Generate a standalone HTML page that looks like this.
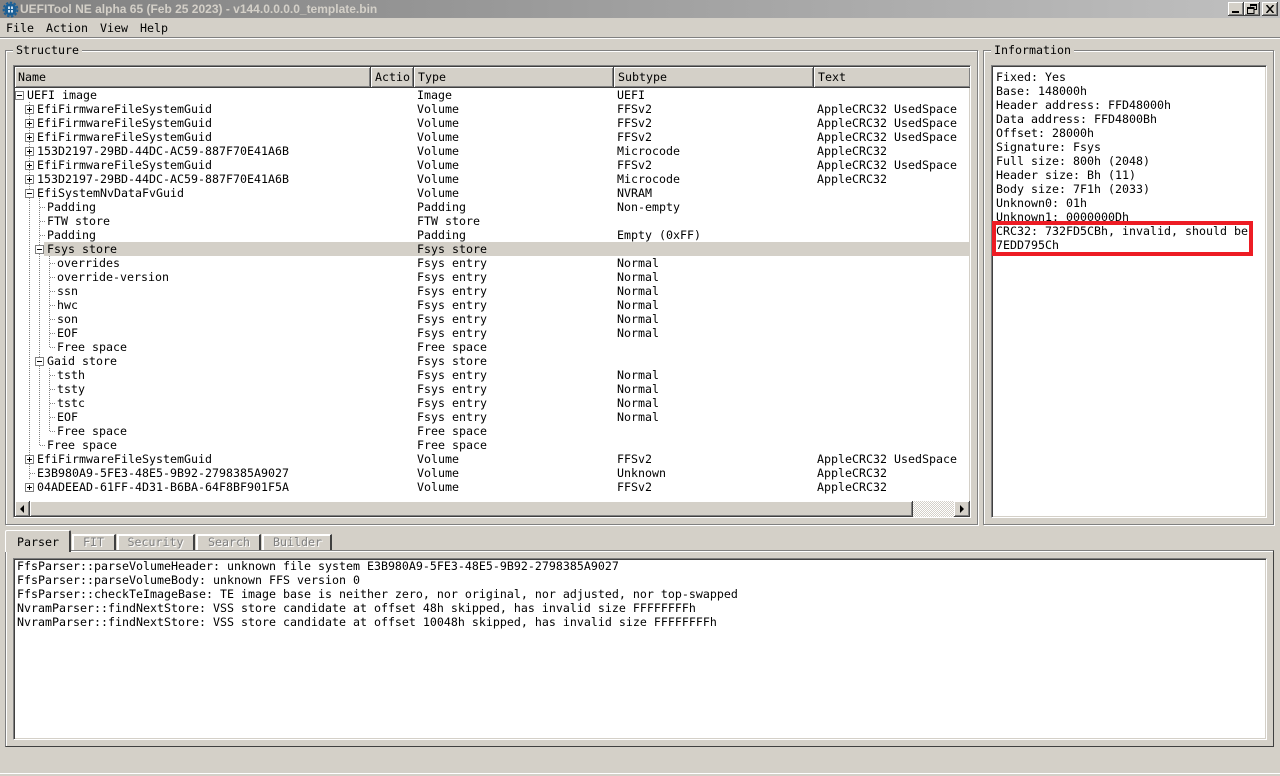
<!DOCTYPE html>
<html><head><meta charset="utf-8"><title>UEFITool</title>
<style>
html,body{margin:0;padding:0;width:1280px;height:776px;overflow:hidden;background:#d4d0c8}
body{position:relative;font:11.63px/14px "DejaVu Sans Mono","Liberation Mono",monospace;color:#000}
div,span,svg{position:absolute;box-sizing:border-box}
#tt{left:0;top:0;width:1280px;height:18px;background:linear-gradient(90deg,#808080,#c0c0c0)}
#tt b{position:absolute;left:20px;top:1px;font:bold 12px/16px "Liberation Sans",sans-serif;color:#d4d0c8;white-space:nowrap}
.wb{top:2px;width:16px;height:14px;background:#d4d0c8;box-shadow:inset -1px -1px 0 #404040,inset 1px 1px 0 #fff,inset -2px -2px 0 #808080}
.m{top:21px;white-space:pre}
.grp{border:1px solid #808080;box-shadow:1px 1px 0 #fff,inset 1px 1px 0 #fff}
.lbl{background:#d4d0c8;padding:0 3px;white-space:pre;height:14px}
.sunk{background:#fff;border-top:1px solid #808080;border-left:1px solid #808080;box-shadow:inset 1px 1px 0 #404040,inset -1px -1px 0 #d4d0c8;border-right:1px solid #fff;border-bottom:1px solid #fff}
.h{top:67px;height:21px;background:#d4d0c8;border-bottom:1px solid #404040;border-right:1px solid #404040;box-shadow:inset 1px 1px 0 #fff,inset -1px -1px 0 #808080;padding:3px 0 0 4px;white-space:pre;overflow:hidden}
.r{left:0;width:1280px;height:14px;white-space:pre}
.r span{top:0}
.l0{left:27px}.l1{left:37px}.l2{left:47px}.l3{left:57px}
.t{left:417px}.s{left:617px}.x{left:817px}
.tab{background:#d4d0c8;border:1px solid #808080;border-bottom:0;box-shadow:inset 1px 1px 0 #fff;border-left-color:#fff;border-top-color:#fff;border-right:2px solid #404040;text-align:center;color:#808080;text-shadow:1px 1px 0 #fff;top:534px;height:16px;line-height:15px}
.sb{top:501px;width:16px;height:16px;background:#d4d0c8;box-shadow:inset -1px -1px 0 #404040,inset 1px 1px 0 #fff,inset -2px -2px 0 #808080}
</style></head><body>
<div id="tt"><b>UEFITool NE alpha 65 (Feb 25 2023) - v144.0.0.0.0_template.bin</b>
<svg style="left:2px;top:1px" width="17" height="17" viewBox="0 0 17 17"><circle cx="8.500" cy="8.500" r="6" fill="#1a5f96"/><circle cx="8.500" cy="8.500" r="7" fill="none" stroke="#1a5f96" stroke-width="1.800" stroke-dasharray="2.500 1.500"/><rect x="6" y="5.500" width="5" height="6" fill="#cfe0ee"/><path d="M8.500 5.500v6M6 8.500h5" stroke="#1a5f96"/></svg>
</div>
<div class="wb" style="left:1228px"><svg style="left:4px;top:9px" width="8" height="2"><rect width="7" height="2" fill="#000"/></svg></div>
<div class="wb" style="left:1244px"><svg style="left:3px;top:2px" width="10" height="10"><path d="M3.500 2.500V.5h6v5h-2M.5 3.500h6.500v6H.5z" fill="none" stroke="#000"/><path d="M3 1h7M0 4h7" stroke="#000" stroke-width="1" transform="translate(0,.5)"/></svg></div>
<div class="wb" style="left:1262px"><svg style="left:4px;top:3px" width="9" height="8"><path d="M.5 0l7 8M7.500 0l-7 8" stroke="#000" stroke-width="1.500"/></svg></div>

<span class="m" style="left:6px">File</span><span class="m" style="left:46px">Action</span><span class="m" style="left:100px">View</span><span class="m" style="left:140px">Help</span>
<div style="left:0;top:37px;width:1280px;height:1px;background:#808080"></div>
<div style="left:0;top:38px;width:1280px;height:1px;background:#fff"></div>

<div class="grp" style="left:5px;top:50px;width:973px;height:475px"></div>
<span class="lbl" style="left:13px;top:43px">Structure</span>
<div class="grp" style="left:983px;top:50px;width:291px;height:475px"></div>
<span class="lbl" style="left:991px;top:43px">Information</span>

<div class="sunk" style="left:13px;top:65px;width:958px;height:453px"></div>
<div class="h" style="left:15px;width:356px;padding-left:3px">Name</div>
<div class="h" style="left:371px;width:43px">Actio</div>
<div class="h" style="left:414px;width:200px">Type</div>
<div class="h" style="left:614px;width:200px">Subtype</div>
<div class="h" style="left:814px;width:156px;border-right:0">Text</div>

<div style="left:44px;top:242px;width:926px;height:14px;background:#d4d0c8"></div>
<svg style="left:0;top:0" width="100" height="500" fill="none">
<g stroke="#808080" stroke-dasharray="1 1">
<path d="M29.500 102V480M39.500 198V445M49.500 256V347M49.500 368V431"/>
<path d="M40 207.500h5M40 221.500h5M40 235.500h5M40 445.500h5M50 263.500h5M50 277.500h5M50 291.500h5M50 305.500h5M50 319.500h5M50 333.500h5M50 347.500h5M50 375.500h5M50 389.500h5M50 403.500h5M50 417.500h5M50 431.500h5M30 473.500h5"/>
</g>
<g fill="#fff" stroke="#808080">
<rect x="15.500" y="91.500" width="8" height="8"/>
<rect x="25.500" y="105.500" width="8" height="8"/><rect x="25.500" y="119.500" width="8" height="8"/><rect x="25.500" y="133.500" width="8" height="8"/><rect x="25.500" y="147.500" width="8" height="8"/><rect x="25.500" y="161.500" width="8" height="8"/><rect x="25.500" y="175.500" width="8" height="8"/><rect x="25.500" y="189.500" width="8" height="8"/>
<rect x="35.500" y="245.500" width="8" height="8"/><rect x="35.500" y="357.500" width="8" height="8"/>
<rect x="25.500" y="455.500" width="8" height="8"/><rect x="25.500" y="483.500" width="8" height="8"/>
</g>
<path stroke="#000" d="M17 95.500h5M27 109.500h5M29.500 107v5M27 123.500h5M29.500 121v5M27 137.500h5M29.500 135v5M27 151.500h5M29.500 149v5M27 165.500h5M29.500 163v5M27 179.500h5M29.500 177v5M27 193.500h5M37 249.500h5M37 361.500h5M27 459.500h5M29.500 457v5M27 487.500h5M29.500 485v5"/>
</svg>

<div class="r" style="top:88px"><span class="l0">UEFI image</span><span class="t">Image</span><span class="s">UEFI</span></div>
<div class="r" style="top:102px"><span class="l1">EfiFirmwareFileSystemGuid</span><span class="t">Volume</span><span class="s">FFSv2</span><span class="x">AppleCRC32 UsedSpace</span></div>
<div class="r" style="top:116px"><span class="l1">EfiFirmwareFileSystemGuid</span><span class="t">Volume</span><span class="s">FFSv2</span><span class="x">AppleCRC32 UsedSpace</span></div>
<div class="r" style="top:130px"><span class="l1">EfiFirmwareFileSystemGuid</span><span class="t">Volume</span><span class="s">FFSv2</span><span class="x">AppleCRC32 UsedSpace</span></div>
<div class="r" style="top:144px"><span class="l1">153D2197-29BD-44DC-AC59-887F70E41A6B</span><span class="t">Volume</span><span class="s">Microcode</span><span class="x">AppleCRC32</span></div>
<div class="r" style="top:158px"><span class="l1">EfiFirmwareFileSystemGuid</span><span class="t">Volume</span><span class="s">FFSv2</span><span class="x">AppleCRC32 UsedSpace</span></div>
<div class="r" style="top:172px"><span class="l1">153D2197-29BD-44DC-AC59-887F70E41A6B</span><span class="t">Volume</span><span class="s">Microcode</span><span class="x">AppleCRC32</span></div>
<div class="r" style="top:186px"><span class="l1">EfiSystemNvDataFvGuid</span><span class="t">Volume</span><span class="s">NVRAM</span></div>
<div class="r" style="top:200px"><span class="l2">Padding</span><span class="t">Padding</span><span class="s">Non-empty</span></div>
<div class="r" style="top:214px"><span class="l2">FTW store</span><span class="t">FTW store</span></div>
<div class="r" style="top:228px"><span class="l2">Padding</span><span class="t">Padding</span><span class="s">Empty (0xFF)</span></div>
<div class="r" style="top:242px"><span class="l2">Fsys store</span><span class="t">Fsys store</span></div>
<div class="r" style="top:256px"><span class="l3">overrides</span><span class="t">Fsys entry</span><span class="s">Normal</span></div>
<div class="r" style="top:270px"><span class="l3">override-version</span><span class="t">Fsys entry</span><span class="s">Normal</span></div>
<div class="r" style="top:284px"><span class="l3">ssn</span><span class="t">Fsys entry</span><span class="s">Normal</span></div>
<div class="r" style="top:298px"><span class="l3">hwc</span><span class="t">Fsys entry</span><span class="s">Normal</span></div>
<div class="r" style="top:312px"><span class="l3">son</span><span class="t">Fsys entry</span><span class="s">Normal</span></div>
<div class="r" style="top:326px"><span class="l3">EOF</span><span class="t">Fsys entry</span><span class="s">Normal</span></div>
<div class="r" style="top:340px"><span class="l3">Free space</span><span class="t">Free space</span></div>
<div class="r" style="top:354px"><span class="l2">Gaid store</span><span class="t">Fsys store</span></div>
<div class="r" style="top:368px"><span class="l3">tsth</span><span class="t">Fsys entry</span><span class="s">Normal</span></div>
<div class="r" style="top:382px"><span class="l3">tsty</span><span class="t">Fsys entry</span><span class="s">Normal</span></div>
<div class="r" style="top:396px"><span class="l3">tstc</span><span class="t">Fsys entry</span><span class="s">Normal</span></div>
<div class="r" style="top:410px"><span class="l3">EOF</span><span class="t">Fsys entry</span><span class="s">Normal</span></div>
<div class="r" style="top:424px"><span class="l3">Free space</span><span class="t">Free space</span></div>
<div class="r" style="top:438px"><span class="l2">Free space</span><span class="t">Free space</span></div>
<div class="r" style="top:452px"><span class="l1">EfiFirmwareFileSystemGuid</span><span class="t">Volume</span><span class="s">FFSv2</span><span class="x">AppleCRC32 UsedSpace</span></div>
<div class="r" style="top:466px"><span class="l1">E3B980A9-5FE3-48E5-9B92-2798385A9027</span><span class="t">Volume</span><span class="s">Unknown</span><span class="x">AppleCRC32</span></div>
<div class="r" style="top:480px"><span class="l1">04ADEEAD-61FF-4D31-B6BA-64F8BF901F5A</span><span class="t">Volume</span><span class="s">FFSv2</span><span class="x">AppleCRC32</span></div>

<div style="left:15px;top:501px;width:955px;height:16px;background-color:#e8e6e0;background-image:repeating-conic-gradient(#d4d0c8 0 25%,#fff 0 50%);background-size:2px 2px"></div>
<div class="sb" style="left:15px;width:15px"><svg style="left:5px;top:4px" width="6" height="8"><path d="M4 0v8L0 4z" fill="#000"/></svg></div>
<div class="sb" style="left:30px;width:883px"></div>
<div class="sb" style="left:954px"><svg style="left:6px;top:4px" width="6" height="8"><path d="M0 0v8l4-4z" fill="#000"/></svg></div>

<div class="sunk" style="left:991px;top:65px;width:276px;height:453px"></div>
<div style="left:996px;top:70px;width:265px;white-space:pre">Fixed: Yes
Base: 148000h
Header address: FFD48000h
Data address: FFD4800Bh
Offset: 28000h
Signature: Fsys
Full size: 800h (2048)
Header size: Bh (11)
Body size: 7F1h (2033)
Unknown0: 01h
Unknown1: 0000000Dh
CRC32: 732FD5CBh, invalid, should be
7EDD795Ch</div>
<div style="left:992px;top:221px;width:261px;height:35px;border:4px solid #ed1c24"></div>

<div class="grp" style="left:5px;top:550px;width:1269px;height:197px;border-bottom-color:#404040;border-right-color:#404040;box-shadow:inset 1px 1px 0 #fff"></div>
<div class="tab" style="left:72px;width:44px">FIT</div>
<div class="tab" style="left:117px;width:78px">Security</div>
<div class="tab" style="left:196px;width:65px;padding-left:2px">Search</div>
<div class="tab" style="left:262px;width:70px;padding-left:2px">Builder</div>
<div style="left:5px;top:530px;width:66px;height:22px;background:#d4d0c8;border-top:1px solid #fff;border-left:1px solid #fff;border-right:2px solid #404040;padding:4px 0 0 11px;border-radius:2px 2px 0 0">Parser</div>

<div class="sunk" style="left:13px;top:558px;width:1254px;height:182px"></div>
<div style="left:17px;top:559px;width:1240px;white-space:pre">FfsParser::parseVolumeHeader: unknown file system E3B980A9-5FE3-48E5-9B92-2798385A9027
FfsParser::parseVolumeBody: unknown FFS version 0
FfsParser::checkTeImageBase: TE image base is neither zero, nor original, nor adjusted, nor top-swapped
NvramParser::findNextStore: VSS store candidate at offset 48h skipped, has invalid size FFFFFFFFh
NvramParser::findNextStore: VSS store candidate at offset 10048h skipped, has invalid size FFFFFFFFh</div>

<div style="left:0;top:773px;width:1280px;height:1px;background:#fff"></div>
</body></html>
